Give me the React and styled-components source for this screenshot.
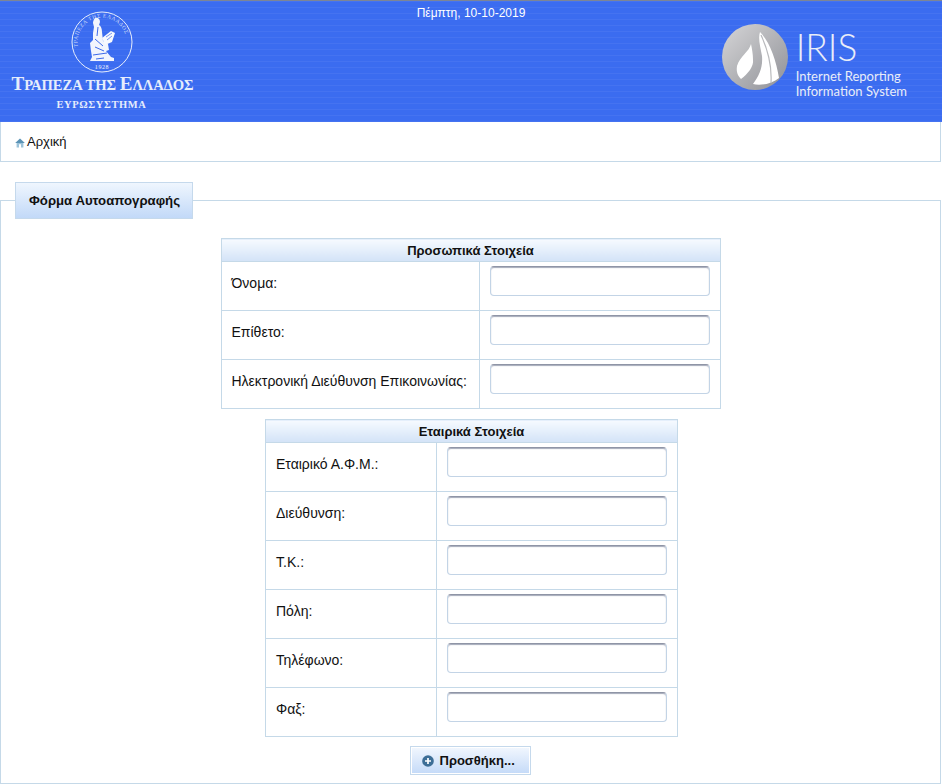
import React from 'react';
import styled, { createGlobalStyle } from 'styled-components';

const personalFields = ['Όνομα:', 'Επίθετο:', 'Ηλεκτρονική Διεύθυνση Επικοινωνίας:'];
const companyFields = ['Εταιρικό Α.Φ.Μ.:', 'Διεύθυνση:', 'Τ.Κ.:', 'Πόλη:', 'Τηλέφωνο:', 'Φαξ:'];

const Seal = () => (
  <SealSvg viewBox="0 0 62 62" width="62" height="62">
    <defs>
      <path id="sealRing" d="M7.5 38 A24.5 24.5 0 1 1 54.5 38" />
    </defs>
    <circle cx="31" cy="31" r="30" fill="none" stroke="#e8eefc" strokeWidth="1" />
    <text fontFamily="'Liberation Serif', serif" fontWeight="normal" fontSize="5.6" fill="#cfdcf9" letterSpacing="0.5">
      <textPath href="#sealRing" startOffset="2">ΤΡΑΠΕΖΑ ΤΗΣ ΕΛΛΑΔΟΣ</textPath>
    </text>
    <text x="31" y="58" textAnchor="middle" fontFamily="'Liberation Serif', serif" fontWeight="normal" fontSize="6" fill="#eef3fd" letterSpacing="0.6">
      1928
    </text>
    <path
      d="M24 7c3-1 5 1 5 4l-1 3c2 1 3 4 3 7l1 9 5 3 1 6-3 1 5 6 3 1v3H19l2-4-1-6-1-8 3-3 0-7 1-6-1-4c0-2 1-4 2-5z"
      fill="#f2f5fd"
    />
    <path d="M31 27l9-7 4 2-3 9-7 3z" fill="#f7f9fe" />
    <path d="M24 28l8 7M24 36l9 4M22 44l14-2M27 16l-1 9M25 48l8-1" stroke="#3d6aea" strokeWidth="1" fill="none" />
    <path d="M35 26l6-4M36 29l5-4" stroke="#3d6aea" strokeWidth="0.7" fill="none" />
  </SealSvg>
);

const IrisMark = () => (
  <svg viewBox="0 0 66 66" width="66" height="66">
    <defs>
      <linearGradient id="irisDisc" x1="0.1" y1="0.1" x2="0.9" y2="0.9">
        <stop offset="0" stopColor="#cfcfd1" />
        <stop offset="1" stopColor="#96979d" />
      </linearGradient>
    </defs>
    <circle cx="33" cy="33" r="33" fill="url(#irisDisc)" />
    <path d="M29 20C27 28 18 32 15 42C14 48 16 52 19 55C26 50 32 42 31 36C31 30 30 25 29 20z" fill="#fff" />
    <path d="M38 8C36 14 38 22 40 32C41 44 37 52 31 60C38 62 50 60 57 54C54 36 48 18 38 8z" fill="#fff" />
    <path d="M39 11C46 26 50 42 49 59" stroke="#b9babd" strokeWidth="1.2" fill="none" />
  </svg>
);

const HomeIcon = () => (
  <svg viewBox="0 0 10 10" width="10" height="10">
    <path d="M5 .6L.2 5h9.6z" fill="#5b93b5" />
    <path d="M1.6 5h6.8v4.4H6V6.2H4v3.2H1.6z" fill="#9cc3da" />
  </svg>
);

const PlusIcon = () => (
  <svg viewBox="0 0 12 12" width="12" height="12">
    <circle cx="6" cy="6" r="5.8" fill="#3d6e96" />
    <path d="M6 3v6M3 6h6" stroke="#fff" strokeWidth="1.7" />
  </svg>
);

const FormTable = ({ title, fields, width, labelWidth, nudge }) => (
  <Table $width={width} $nudge={nudge}>
    <colgroup>
      <col style={{ width: labelWidth }} />
      <col />
    </colgroup>
    <thead>
      <tr>
        <HeadCell colSpan="2">{title}</HeadCell>
      </tr>
    </thead>
    <tbody>
      {fields.map((label) => (
        <tr key={label}>
          <LabelCell>{label}</LabelCell>
          <InputCell>
            <TextInput type="text" />
          </InputCell>
        </tr>
      ))}
    </tbody>
  </Table>
);

export default function App() {
  return (
    <>
      <GlobalStyle />
      <Banner>
        <Brand>
          <Seal />
          <BankName>
            <BigCap>Τ</BigCap>ΡΑΠΕΖΑ ΤΗΣ <BigCap>Ε</BigCap>ΛΛΑΔΟΣ
          </BankName>
          <BankSub>ΕΥΡΩΣΥΣΤΗΜΑ</BankSub>
        </Brand>
        <DateText>Πέμπτη, 10-10-2019</DateText>
        <Iris>
          <IrisMark />
          <IrisText>
            <IrisName>IRIS</IrisName>
            <IrisLine>Internet Reporting</IrisLine>
            <IrisLine>Information System</IrisLine>
          </IrisText>
        </Iris>
      </Banner>
      <Breadcrumb>
        <HomeIcon />
        <span>Αρχική</span>
      </Breadcrumb>
      <Panel>
        <Tab>Φόρμα Αυτοαπογραφής</Tab>
        <PanelBody>
          <FormTable title="Προσωπικά Στοιχεία" fields={personalFields} width={500} labelWidth={258} />
          <FormTable title="Εταιρικά Στοιχεία" fields={companyFields} width={413} labelWidth={171} nudge={2} />
          <AddButton type="button">
            <PlusIcon />
            Προσθήκη...
          </AddButton>
        </PanelBody>
      </Panel>
    </>
  );
}

const GlobalStyle = createGlobalStyle`
  html, body {
    margin: 0;
    background: #fff;
    color: #111;
    font-family: 'Liberation Sans', Arial, sans-serif;
    font-size: 14px;
  }
`;

const Banner = styled.header`
  height: 122px;
  box-sizing: border-box;
  border-top: 1px solid #7d8595;
  display: grid;
  grid-template-columns: 1fr auto 1fr;
  color: #fff;
  background-color: #3b6cf0;
  background-image: repeating-linear-gradient(
    to bottom,
    rgba(255, 255, 255, 0.05) 0,
    rgba(255, 255, 255, 0.05) 1px,
    transparent 1px,
    transparent 6px
  );
`;

const Brand = styled.div`
  box-sizing: border-box;
  width: 193px;
  padding: 10px 0 0 12px;
  display: flex;
  flex-direction: column;
  align-items: center;
  font-family: 'Liberation Serif', serif;
  font-weight: bold;
`;

const SealSvg = styled.svg`
  display: block;
  margin-right: 2px;
`;

const BankName = styled.div`
  font-size: 14.6px;
  line-height: 21px;
  white-space: nowrap;
  color: #e6edfc;
`;

const BigCap = styled.span`
  font-size: 19px;
`;

const BankSub = styled.div`
  margin: 3px 2px 0 0;
  font-size: 10.5px;
  line-height: 12px;
  letter-spacing: 0.6px;
  color: #e6edfc;
`;

const DateText = styled.div`
  padding-top: 5px;
  font-size: 12px;
  line-height: 14px;
`;

const Iris = styled.div`
  justify-self: end;
  display: flex;
  gap: 8px;
  padding: 23px 35px 0 0;
  color: #e9edf8;
`;

const IrisText = styled.div`
  display: flex;
  flex-direction: column;
  font-family: Lato, sans-serif;
`;

const IrisName = styled.div`
  height: 45px;
  font-size: 37px;
  line-height: 46px;
  font-weight: 300;
`;

const IrisLine = styled.div`
  font-size: 13px;
  line-height: 15px;
  white-space: nowrap;
`;

const Breadcrumb = styled.nav`
  height: 40px;
  box-sizing: border-box;
  width: 941px;
  padding: 0 0 0 14px;
  border: 1px solid #c5d9e8;
  border-top: 0;
  display: flex;
  align-items: center;
  gap: 2px;
  font-size: 13px;
  svg {
    margin-top: 3px;
  }
`;

const Panel = styled.fieldset`
  box-sizing: border-box;
  width: 941px;
  height: 602px;
  margin: 20px 0 0;
  padding: 0;
  border: 1px solid #c5d9e8;
`;

const PanelBody = styled.div`
  padding-top: 19px;
  display: flex;
  flex-direction: column;
  align-items: center;
`;

const Tab = styled.legend`
  box-sizing: border-box;
  margin-left: 14px;
  padding: 0 0 0 13px;
  width: 178px;
  height: 37px;
  line-height: 35px;
  font-weight: bold;
  font-size: 13.2px;
  border: 1px solid #c5d9ec;
  background: linear-gradient(to bottom, #eff6fe, #c2d9f8);
`;

const Table = styled.table`
  width: ${(p) => p.$width}px;
  margin: 0 0 10px ${(p) => p.$nudge || 0}px;
  border-collapse: collapse;
  table-layout: fixed;
`;

const HeadCell = styled.th`
  height: 22px;
  padding: 0;
  font-size: 13px;
  border: 1px solid #c5d9e8;
  background: linear-gradient(to bottom, #f6faff, #d3e3f7);
`;

const LabelCell = styled.td`
  height: 49px;
  box-sizing: border-box;
  padding: 0 0 7px 10px;
  border: 1px solid #c5d9e8;
  white-space: nowrap;
`;

const InputCell = styled.td`
  padding: 0 0 0 10px;
  border: 1px solid #c5d9e8;
  vertical-align: top;
`;

const TextInput = styled.input`
  display: block;
  box-sizing: border-box;
  width: 220px;
  height: 30px;
  margin-top: 4px;
  border: 1px solid #c3d4e6;
  border-top-color: #8f95a6;
  border-radius: 4px;
  background: #fff;
  box-shadow: inset 0 1px 1px #a5aaba;
  outline: none;
`;

const AddButton = styled.button`
  box-sizing: border-box;
  width: 121px;
  height: 29px;
  margin: -1px 0 0 -1px;
  padding: 0 0 0 11px;
  display: flex;
  align-items: center;
  gap: 6px;
  font-family: 'Liberation Sans', Arial, sans-serif;
  font-size: 13px;
  font-weight: bold;
  color: #111;
  border: 1px solid #c5d9ec;
  box-shadow: inset 0 0 0 1px #fff;
  background: linear-gradient(to bottom, #f2f7fe, #c4daf8);
`;
